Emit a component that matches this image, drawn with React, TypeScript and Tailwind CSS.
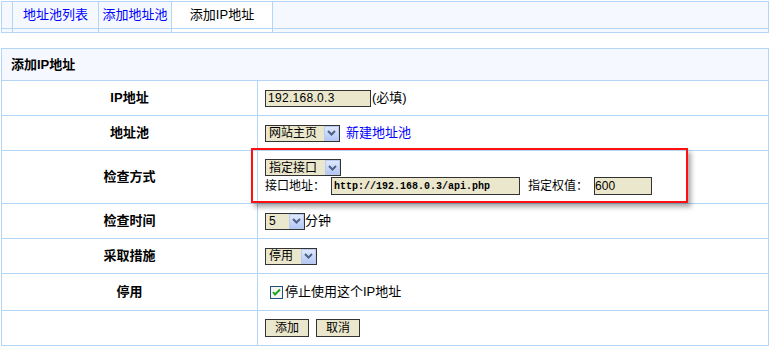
import React from 'react';

const font = { fontFamily: '"Liberation Sans", "Noto Sans CJK SC", sans-serif' };

function Arrow() {
  return (
    <span className="flex h-[15px] w-[15px] items-center justify-center border border-[#b9cbf3] bg-gradient-to-b from-[#dfe8fd] to-[#b4c8f5]">
      <svg width="9" height="6" viewBox="0 0 9 6">
        <path d="M1 1 L4.5 4.5 L8 1" stroke="#4d6185" strokeWidth="2" fill="none" />
      </svg>
    </span>
  );
}

function Select({ label, width }: { label: string; width: string }) {
  return (
    <span className={`inline-flex h-[17px] items-center justify-between border border-[#333] bg-[#ebe7cd] pl-[3px] ${width}`}>
      <span className="text-[12px] leading-none text-black">{label}</span>
      <Arrow />
    </span>
  );
}

function Row({ label, h, children }: { label: string; h: string; children?: React.ReactNode }) {
  return (
    <div className={`flex border-t border-[#b3d6f7] ${h}`}>
      <div className="flex w-[256px] items-center justify-center border-r border-[#b3d6f7] text-[13px] font-bold text-black">
        {label}
      </div>
      <div className="flex flex-1 items-center pl-[7px] text-[13px] text-black">{children}</div>
    </div>
  );
}

export default function App() {
  return (
    <div className="h-[347px] w-[770px] bg-white pl-[1px] pt-[1px]" style={font}>
      {/* tab bar */}
      <div className="flex h-[32px] w-[768px] border border-[#b3d6f7] bg-[#f5f9ff] text-[13px]">
        <div className="w-[11px] border-r border-[#b3d6f7]">
          <div className="h-[27px] border-b border-[#b3d6f7]" />
        </div>
        <div className="w-[86px] border-r border-[#b3d6f7]">
          <div className="flex h-[27px] items-center justify-center border-b border-[#b3d6f7] text-[#0000ff]">地址池列表</div>
        </div>
        <div className="w-[73px] border-r border-[#b3d6f7]">
          <div className="flex h-[27px] items-center justify-center border-b border-[#b3d6f7] text-[#0000ff]">添加地址池</div>
        </div>
        <div className="w-[101px] border-r border-[#b3d6f7] bg-white">
          <div className="flex h-[27px] items-center justify-center border-b border-[#b3d6f7] text-black">添加IP地址</div>
        </div>
        <div className="flex-1">
          <div className="h-[27px] border-b border-[#b3d6f7]" />
        </div>
      </div>

      {/* form panel */}
      <div className="mt-[15px] w-[768px] border-x border-b border-[#b3d6f7]">
        <div className="flex h-[32px] items-center border-t border-[#b3d6f7] bg-[#f5f9ff] pl-[9px] text-[13px] font-bold text-black">
          添加IP地址
        </div>
        <Row label="IP地址" h="h-[35px]">
          <span className="flex h-[17px] w-[106px] items-center border border-[#333] bg-[#ebe7cd] pl-[2px] text-[12px] tracking-[0.3px]">192.168.0.3</span>
          <span className="ml-[1px]">(必填)</span>
        </Row>
        <Row label="地址池" h="h-[35px]">
          <Select label="网站主页" width="w-[75px]" />
          <span className="ml-[6px] text-[#0000ff]">新建地址池</span>
        </Row>
        <div className="relative">
          <Row label="检查方式" h="h-[53px]">
            <div className="flex flex-col gap-[1px] text-[12px]">
              <Select label="指定接口" width="w-[76px]" />
              <div className="flex items-center">
                <span>接口地址：</span>
                <span
                  className="ml-[6px] flex h-[18px] w-[189px] items-center border border-[#333] bg-[#ebe7cd] pl-[2px] text-[10px] font-bold"
                  style={{ fontFamily: '"Liberation Mono", monospace' }}
                >
                  http://192.168.0.3/api.php
                </span>
                <span className="ml-[8px]">指定权值：</span>
                <span className="ml-[6px] flex h-[18px] w-[58px] items-center border border-[#333] bg-[#ebe7cd] text-[12px]">600</span>
              </div>
            </div>
          </Row>
          <div className="pointer-events-none absolute left-[249px] top-[-2px] h-[55px] w-[437px] border-2 border-[#ff1010] shadow-[3px_4px_5px_rgba(0,0,0,0.35)]" />
        </div>
        <Row label="检查时间" h="h-[35px]">
          <Select label="5" width="w-[40px]" />
          <span>分钟</span>
        </Row>
        <Row label="采取措施" h="h-[35px]">
          <Select label="停用" width="w-[52px]" />
        </Row>
        <Row label="停用" h="h-[37px]">
          <svg width="13" height="13" viewBox="0 0 13 13" className="ml-[5px]">
            <rect x="0.5" y="0.5" width="12" height="12" fill="#f4f4f0" stroke="#1c5180" />
            <path d="M3 6 L5 8.5 L10 3.5" stroke="#21a121" strokeWidth="2" fill="none" />
          </svg>
          <span className="ml-[2px]">停止使用这个IP地址</span>
        </Row>
        <Row label="" h="h-[35px]">
          <span className="flex h-[18px] w-[44px] items-center justify-center border border-[#333] bg-[#ebe7cd] text-[12px]">添加</span>
          <span className="ml-[7px] flex h-[18px] w-[44px] items-center justify-center border border-[#333] bg-[#ebe7cd] text-[12px]">取消</span>
        </Row>
      </div>
    </div>
  );
}
